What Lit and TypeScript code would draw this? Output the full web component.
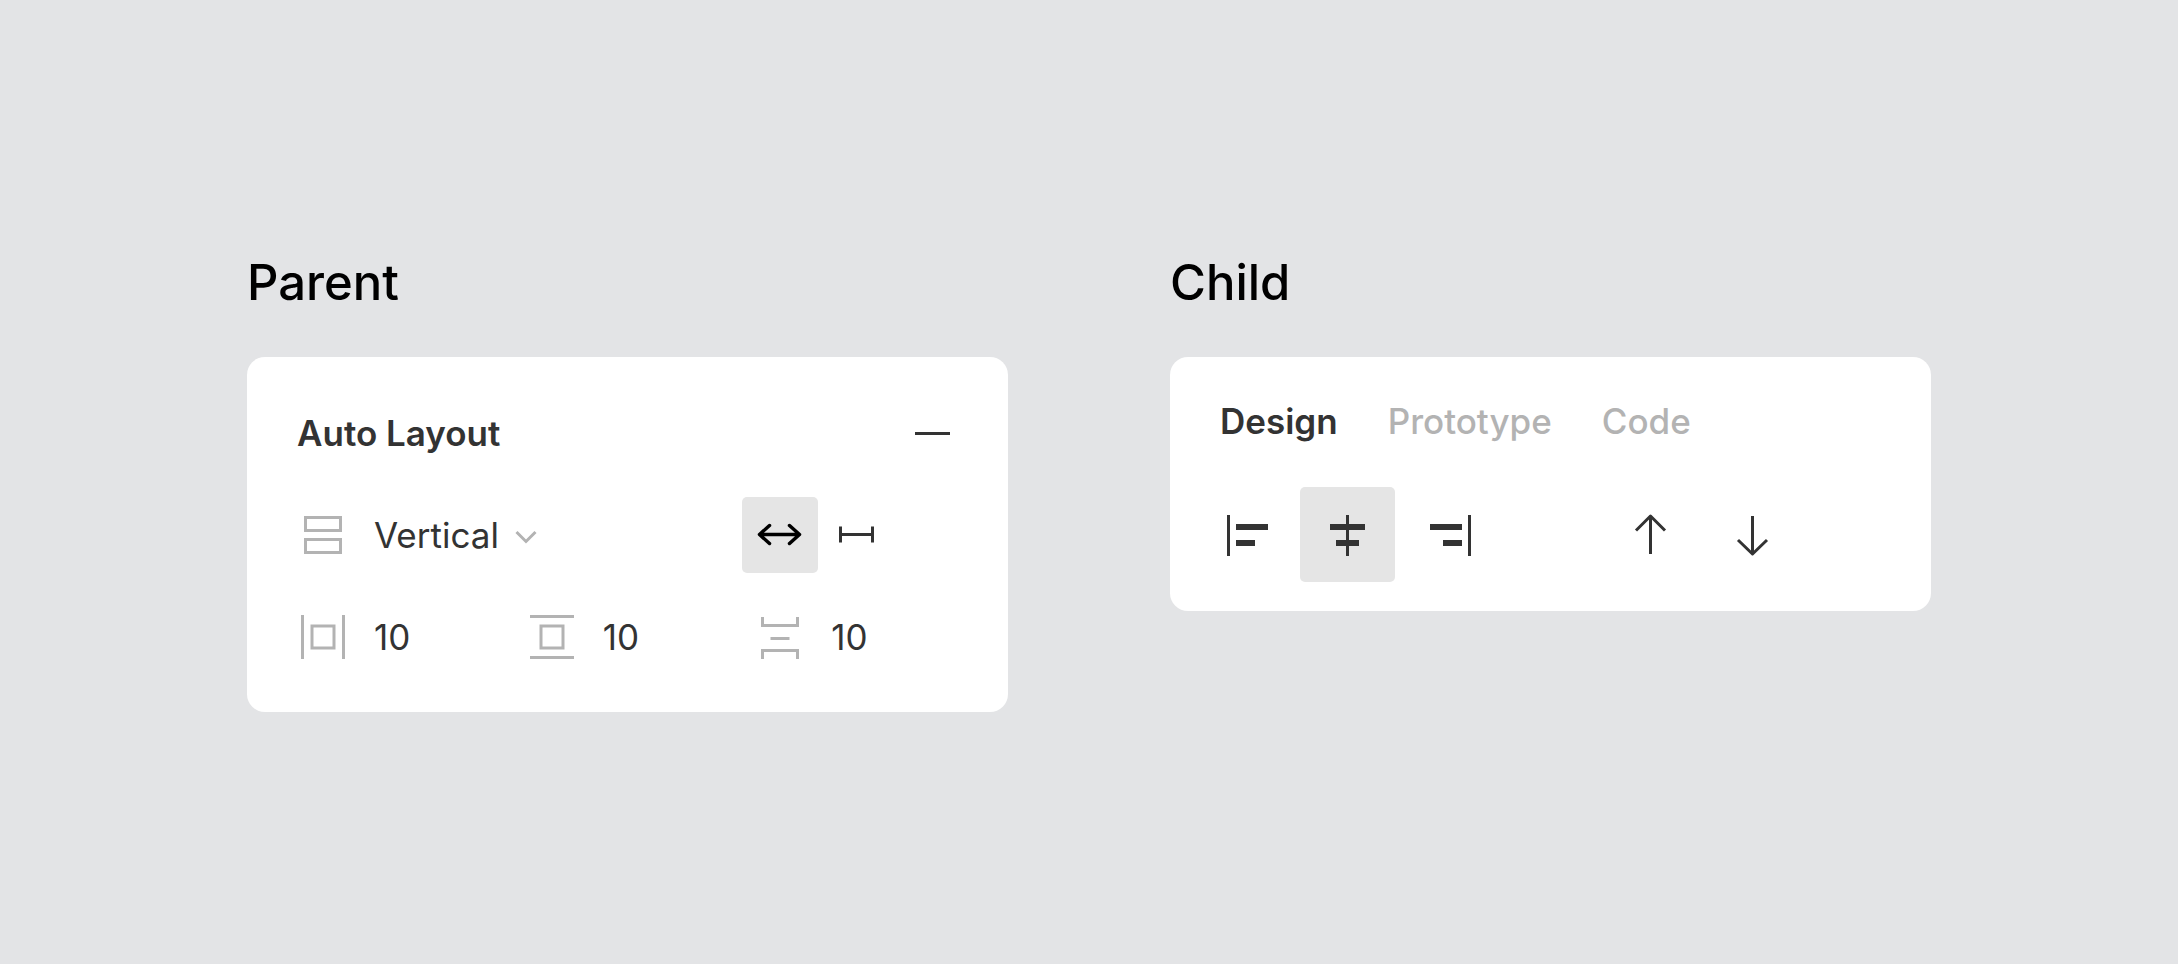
import { LitElement, html, css, svg } from "lit";
import { customElement, state } from "lit/decorators.js";
import { classMap } from "lit/directives/class-map.js";

const shared = css`
  * {
    box-sizing: border-box;
  }
  :host {
    display: block;
    font-family: Inter, "Liberation Sans", sans-serif;
    color: #333;
  }
  svg {
    display: block;
    fill: none;
    stroke: currentColor;
    stroke-width: 3;
  }
  button,
  input,
  select {
    margin: 0;
    padding: 0;
    border: 0;
    background: none;
    color: inherit;
    font: inherit;
    border-radius: 5px;
  }
  button {
    display: grid;
    place-items: center;
    cursor: pointer;
  }
  .card {
    background: #fff;
    border-radius: 18px;
    font-size: 35px;
    line-height: 50px;
  }
  .on {
    background: #e5e5e5;
  }
`;

const icon = (body: unknown, size = 48) => html`
  <svg width=${size} height=${size} viewBox="-24 -24 ${size} ${size}" aria-hidden="true">${body}</svg>
`;

const icons = {
  vertical: svg`<path d="M-17.5-17.5h35v13h-35zM-17.5 4.5h35v13h-35z"/>`,
  padX: svg`<path d="M-20.5-22v44M20.5-22v44M-11-11h22v22h-22z"/>`,
  padY: svg`<path d="M-22-20.5h44M-22 20.5h44M-11-11h22v22h-22z"/>`,
  spacing: svg`<path d="M-17.500-20v8.500h35v-8.500M-9.500 1.500h19M-17.500 22v-8.500h35v8.500"/>`,
  grow: svg`<path stroke-width="3.500" stroke-linecap="round" stroke-linejoin="round" d="M-20.500-.5h39.500M-10.500-9.500l-10 9 10 9M9.500-9.500l10 9-10 9"/>`,
  fixed: svg`<path d="M-15.500-.5h32M-15.500-8.500v16M16.500-8.500v16"/>`,
  minus: svg`<path d="M-18 .5h35"/>`,
  left: svg`<path d="M-18.500-20v41"/><path stroke-width="6" d="M-11-8h32M-11 8h19"/>`,
  center: svg`<path d="M-.5-20v41"/><path stroke-width="6" d="M-18-8h35M-12 8h23"/>`,
  right: svg`<path d="M20.500-20v41"/><path stroke-width="6" d="M-19-8h32M-6 8h19"/>`,
  up: svg`<path stroke-linejoin="round" d="M-.5 19v-38M-15-4.500l14.500-14.500 14.500 14.500"/>`,
  down: svg`<path stroke-linejoin="round" d="M.5-19v38M-14 5l14.500 14 14.500-14"/>`,
};

@customElement("auto-layout-panel")
class AutoLayoutPanel extends LitElement {
  @state() resizing = "grow";

  static styles = [
    shared,
    css`
      .card {
        display: grid;
        grid-auto-rows: 102px;
        padding: 25px 50px 24px 25px;
      }
      .row,
      .picker {
        display: flex;
        align-items: center;
      }
      .head {
        padding-left: 25px;
      }
      h3 {
        flex: 1;
        margin: 0;
        font-size: 35px;
        font-weight: 600;
      }
      .remove {
        width: 50px;
        height: 50px;
      }
      .picker {
        flex: 1;
      }
      .glyph {
        display: grid;
        place-items: center;
        flex: none;
        width: 102px;
        color: #b3b3b3;
      }
      select {
        appearance: none;
        field-sizing: content;
        height: 50px;
      }
      .chevron {
        margin-left: 16px;
        color: #b3b3b3;
        pointer-events: none;
      }
      .resize {
        display: flex;
        margin-right: 64px;
      }
      .resize button {
        width: 76px;
        height: 76px;
      }
      .resize .on {
        color: #000;
      }
      .fields {
        display: grid;
        grid-template-columns: repeat(3, 1fr);
      }
      .field {
        display: flex;
        align-items: center;
      }
      input {
        width: 100%;
        min-width: 0;
        height: 50px;
      }
    `,
  ];

  private toggle(id: string, label: string, body: unknown) {
    return html`<button
      type="button"
      class=${classMap({ on: this.resizing === id })}
      aria-label=${label}
      aria-pressed=${this.resizing === id}
      @click=${() => (this.resizing = id)}
    >
      ${icon(body)}
    </button>`;
  }

  private field(label: string, body: unknown) {
    return html`<label class="field">
      <span class="glyph">${icon(body)}</span>
      <input type="text" inputmode="numeric" aria-label=${label} .value=${"10"} />
    </label>`;
  }

  render() {
    return html`<section class="card">
      <div class="row head">
        <h3>Auto Layout</h3>
        <button type="button" class="remove" aria-label="Remove auto layout">${icon(icons.minus)}</button>
      </div>
      <div class="row">
        <label class="picker">
          <span class="glyph">${icon(icons.vertical)}</span>
          <select aria-label="Direction">
            <option selected>Vertical</option>
            <option>Horizontal</option>
          </select>
          <svg class="chevron" width="22" height="18" viewBox="0 0 22 18" aria-hidden="true">
            <path d="M1.5 6l9.5 9.5L20.5 6" />
          </svg>
        </label>
        <div class="resize">
          ${this.toggle("grow", "Grow", icons.grow)} ${this.toggle("fixed", "Fixed width", icons.fixed)}
        </div>
      </div>
      <div class="fields">
        ${this.field("Horizontal padding", icons.padX)} ${this.field("Vertical padding", icons.padY)}
        ${this.field("Spacing", icons.spacing)}
      </div>
    </section>`;
  }
}

@customElement("design-panel")
class DesignPanel extends LitElement {
  @state() tab = "Design";
  @state() align = "center";

  static styles = [
    shared,
    css`
      .card {
        padding-bottom: 26px;
      }
      .tabs {
        display: flex;
        align-items: center;
        gap: 50px;
        height: 127px;
        padding-left: 50px;
      }
      .tab {
        color: #b3b3b3;
        font-weight: 500;
      }
      .tab.current {
        color: #333;
        font-weight: 600;
      }
      .tools {
        display: flex;
        align-items: center;
        gap: 6px;
        height: 101px;
        padding-left: 29px;
      }
      .tools button {
        width: 95px;
        height: 95px;
      }
      .order {
        display: flex;
        gap: 6px;
        margin-left: 101px;
      }
    `,
  ];

  render() {
    return html`<section class="card">
      <div class="tabs" role="tablist">
        ${["Design", "Prototype", "Code"].map(
          (name) => html`<button
            type="button"
            role="tab"
            class=${classMap({ tab: true, current: this.tab === name })}
            aria-selected=${this.tab === name}
            @click=${() => (this.tab = name)}
          >
            ${name}
          </button>`
        )}
      </div>
      <div class="tools">
        ${(["left", "center", "right"] as const).map(
          (side) => html`<button
            type="button"
            class=${classMap({ on: this.align === side })}
            aria-label="Align ${side}"
            aria-pressed=${this.align === side}
            @click=${() => (this.align = side)}
          >
            ${icon(icons[side], 47)}
          </button>`
        )}
        <div class="order">
          <button type="button" aria-label="Move up">${icon(icons.up, 47)}</button>
          <button type="button" aria-label="Move down">${icon(icons.down, 47)}</button>
        </div>
      </div>
    </section>`;
  }
}

@customElement("app-root")
class AppRoot extends LitElement {
  static styles = css`
    :host {
      display: grid;
      grid-template-columns: 1fr 1fr;
      column-gap: 162px;
      align-content: center;
      align-items: start;
      box-sizing: border-box;
      min-height: 100vh;
      padding: 0 247px;
      background: #e3e4e6;
      font-family: Inter, "Liberation Sans", sans-serif;
    }
    h2 {
      margin: 0 0 43px;
      color: #000;
      font-size: 49px;
      font-weight: 500;
      line-height: 62px;
    }
    @media (max-width: 1900px) {
      :host {
        grid-template-columns: minmax(0, 761px);
        justify-content: center;
        row-gap: 60px;
        padding: 60px 24px;
      }
    }
  `;

  render() {
    return html`
      <div>
        <h2>Parent</h2>
        <auto-layout-panel></auto-layout-panel>
      </div>
      <div>
        <h2>Child</h2>
        <design-panel></design-panel>
      </div>
    `;
  }
}
